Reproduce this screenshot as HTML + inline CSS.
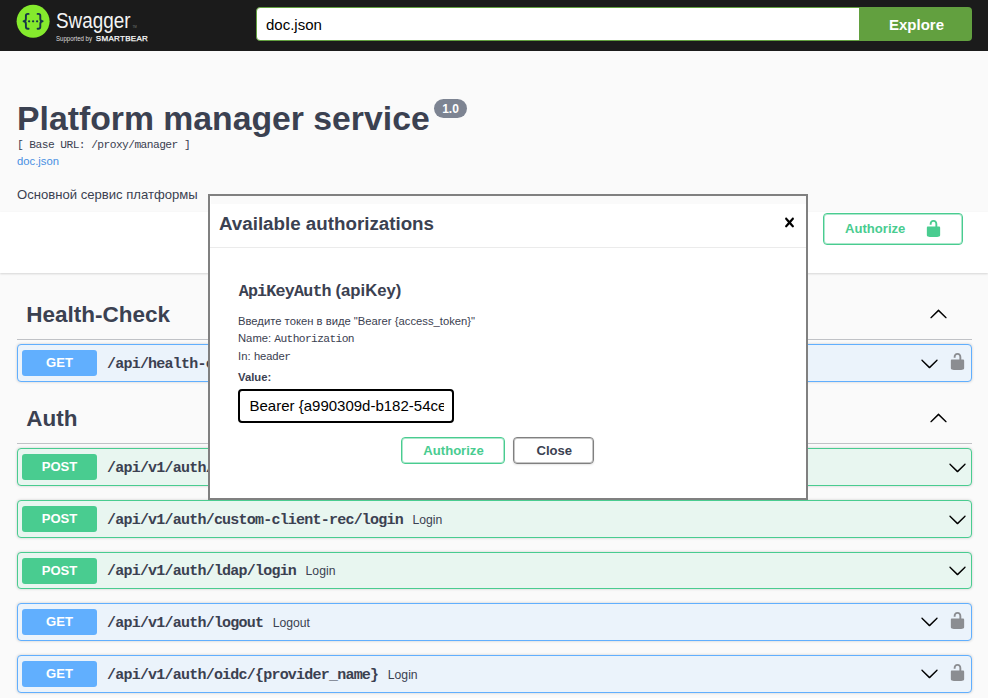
<!DOCTYPE html>
<html><head><meta charset="utf-8">
<style>
*{box-sizing:border-box}
html,body{margin:0;padding:0}
body{width:988px;height:698px;overflow:hidden;background:#fafafa;font-family:"Liberation Sans",sans-serif;color:#3b4151;position:relative}
.topbar{position:absolute;left:0;top:0;width:988px;height:51px;background:#1b1b1b}
.logo-c{position:absolute;left:17px;top:5px;width:32px;height:32px}
.logo-t{position:absolute;left:55px;top:7px;font-size:22px;color:#fff;letter-spacing:-0.5px}
.logo-s{position:absolute;left:55px;top:35px;font-size:6px;color:#fff;white-space:nowrap}
.logo-s b{font-size:7px;letter-spacing:0.7px;margin-left:2px}
.inp{position:absolute;left:256px;top:7px;width:604px;height:34px;background:#fff;border:1px solid #62a03f;border-radius:4px 0 0 4px;font-size:15px;color:#000;padding:8px 9px;line-height:18px}
.explore{position:absolute;left:860px;top:7px;width:112px;height:34px;background:#62a03f;border-radius:0 4px 4px 0;color:#fff;font-weight:bold;font-size:15px;text-align:center;line-height:35px;padding-left:1px}
h2.title{position:absolute;left:17px;top:97.7px;margin:0;font-size:33.75px;line-height:40px;font-weight:bold;color:#3b4151;white-space:nowrap}
.ver{position:absolute;left:434px;top:99px;width:33px;height:19px;border-radius:10px;background:#7d8492;color:#fff;font-size:12px;font-weight:bold;text-align:center;line-height:20px}
.base{position:absolute;left:17px;top:138px;font-family:"Liberation Mono",monospace;font-size:11.25px;letter-spacing:-0.57px;line-height:14px;white-space:pre;color:#3b4151}
.link{position:absolute;left:17px;top:154px;font-size:11.25px;line-height:14px;color:#4990e2}
.desc{position:absolute;left:17px;top:187px;font-size:13.1px;line-height:16px;color:#3b4151}
.scheme{position:absolute;left:0;top:212px;width:988px;height:61px;background:#fff;box-shadow:0 1px 2px 0 rgba(0,0,0,.15)}
.authbtn{position:absolute;left:823px;top:213px;width:140px;height:32px;border:1px solid #49cc90;box-shadow:inset 0 0 0 1px rgba(73,204,144,.45);border-radius:4px;color:#49cc90;font-weight:bold;font-size:13.1px;line-height:30px;padding-left:21px}
h3.tag{position:absolute;left:17px;width:955px;margin:0;font-size:22.5px;line-height:28px;font-weight:bold;color:#3b4151;padding-left:9.25px;border-bottom:1px solid rgba(59,65,81,.3)}
.op{position:absolute;left:17px;width:955px;height:37.5px;border:1px solid;border-radius:4px;box-shadow:0 0 3px rgba(0,0,0,.19)}
.op.get{border-color:#61affe;background:#ebf3fb}
.op.post{border-color:#49cc90;background:#e8f6f0}
.m{position:absolute;left:4px;top:5px;width:75px;height:26px;border-radius:3px;color:#fff;font-weight:bold;font-size:13.1px;text-align:center;line-height:25.6px}
.get .m{background:#61affe}
.post .m{background:#49cc90}
.p{position:absolute;left:89px;top:9.6px;font-family:"Liberation Mono",monospace;font-weight:bold;font-size:15px;letter-spacing:-0.78px;line-height:20px;color:#3b4151;white-space:nowrap}
.p span{font-family:"Liberation Sans",sans-serif;font-weight:normal;font-size:12.2px;letter-spacing:0;margin-left:9.5px;line-height:0}
svg.ic{position:absolute;width:19px;height:19px}
.modal{position:absolute;left:208px;top:194px;width:600px;height:306px;border:2px solid #808080;background:#fff}
.modal .band{position:absolute;left:1px;top:0;right:0;height:8px;background:#fafafa}
.modal h3{position:absolute;left:9px;top:15.6px;margin:0;font-size:18.75px;line-height:24px;font-weight:bold;color:#3b4151}
.modal .hr{position:absolute;left:0;right:0;top:51px;height:1px;background:#ebebeb}
.modal h4{position:absolute;left:28.7px;top:84.5px;margin:0;font-size:16.7px;line-height:20px;font-weight:bold;color:#3b4151;white-space:nowrap}
.modal h4 code{font-family:"Liberation Mono",monospace;font-size:16.7px;letter-spacing:-0.8px}
.modal .t{position:absolute;left:28px;font-size:11.25px;line-height:14px;color:#3b4151;white-space:nowrap}
.modal .t code{font-family:"Liberation Mono",monospace;font-size:11.25px;letter-spacing:-0.62px}
.modal .val{position:absolute;left:28px;top:193.25px;width:216px;height:34px;border:2px solid #000;border-radius:4px;font-size:15px;color:#000;line-height:30.5px;padding-left:9.5px;overflow:hidden;white-space:nowrap}
.modal .val div{width:194.5px;overflow:hidden}
.mb{position:absolute;top:241px;height:27px;border:1px solid;border-radius:4px;font-weight:bold;font-size:13.1px;text-align:center;line-height:25.5px;padding-left:1.5px}
.mb.a{left:191px;width:103.5px;border-color:#49cc90;color:#49cc90;box-shadow:inset 0 0 0 1px rgba(73,204,144,.45)}
.mb.c{left:303px;width:81px;border-color:#808080;color:#3b4151;box-shadow:inset 0 0 0 1px rgba(128,128,128,.45),0 1px 2px rgba(0,0,0,.1)}
</style></head><body>
<svg width="0" height="0" style="position:absolute"><defs>
<path id="dn" d="M17.418 6.109c.272-.268.709-.268.979 0s.271.701 0 .969l-7.908 7.830c-.27.268-.707.268-.979 0l-7.908-7.830c-.27-.268-.27-.701 0-.969.271-.268.709-.268.979 0L10 13.250l7.418-7.141z"/>
<path id="up" d="M17.418 14.908C17.690 15.176 18.127 15.176 18.397 14.908C18.667 14.640 18.668 14.207 18.397 13.939L10.489 6.109C10.219 5.841 9.782 5.841 9.510 6.109L1.602 13.939C1.332 14.207 1.332 14.640 1.602 14.908C1.873 15.176 2.311 15.176 2.581 14.908L10 7.767L17.418 14.908Z"/>
<path id="ul" d="M15.8 8H14V5.6C14 2.703 12.665 1 10 1 7.334 1 6 2.703 6 5.600V6h2v-.801C8 3.754 8.797 3 10 3c1.203 0 2 .754 2 2.199V8H4c-.553 0-1 .646-1 1.199V17c0 .549.428 1.139.951 1.307l1.197.387C5.672 18.861 6.550 19 7.100 19h5.800c.549 0 1.428-.139 1.951-.307l1.196-.387c.524-.167.953-.757.953-1.306V9.199C17 8.646 16.352 8 15.800 8z"/>
</defs></svg>
<div class="topbar">
<svg style="position:absolute;left:0;top:0" width="170" height="51" viewBox="0 0 170 51">
<circle cx="33.1" cy="21.3" r="16.5" fill="#85ea2d"/>
<g fill="none" stroke="#173647" stroke-width="1.9" stroke-linecap="round" stroke-linejoin="round">
<path d="M28.6 13.9h-0.8q-1.9 0-1.9 1.9v2.9q0 2.6-2.3 2.6q2.3 0 2.3 2.6v2.9q0 1.9 1.9 1.9h0.8"/>
<path d="M37.6 13.9h0.8q1.9 0 1.9 1.9v2.9q0 2.6 2.3 2.6q-2.3 0-2.3 2.6v2.9q0 1.9-1.9 1.9h-0.8"/>
</g>
<g fill="#173647"><circle cx="29.1" cy="21.3" r="1.15"/><circle cx="33.1" cy="21.3" r="1.15"/><circle cx="37.1" cy="21.3" r="1.15"/></g>
<text x="56" y="27.8" font-family="Liberation Sans, sans-serif" font-size="21.2" fill="#f4f4f4" textLength="74.5" lengthAdjust="spacingAndGlyphs">Swagger</text>
<text x="132.4" y="28.2" font-family="Liberation Sans, sans-serif" font-size="3" fill="#777">TM</text>
<text x="56" y="41.2" font-family="Liberation Sans, sans-serif" font-size="6.8" fill="#ddd" textLength="36" lengthAdjust="spacingAndGlyphs">Supported by</text>
<text x="95.8" y="41.2" font-family="Liberation Sans, sans-serif" font-size="8" fill="#fff" stroke="#fff" stroke-width="0.25" textLength="52" lengthAdjust="spacing">SMARTBEAR</text>
</svg>
<div class="inp">doc.json</div>
<div class="explore">Explore</div>
</div>
<h2 class="title">Platform manager service</h2>
<div class="ver">1.0</div>
<div class="base">[ Base URL: /proxy/manager ]</div>
<div class="link">doc.json</div>
<div class="desc">Основной сервис платформы</div>
<div class="scheme"></div>
<div class="authbtn">Authorize</div>
<h3 class="tag" style="top:289px;height:51px;padding-top:11.7px">Health-Check</h3>
<div class="op get" style="top:344.4px"><div class="m">GET</div><div class="p">/api/health-check</div><svg class="ic" viewBox="0 0 20 20" style="left:901.8px;top:8.4px;fill:#000"><use href="#dn"/></svg><svg class="ic" viewBox="0 0 20 20" style="left:930.1px;top:6.8px;fill:#8b8d91"><use href="#ul"/></svg></div>
<h3 class="tag" style="top:393px;height:51px;padding-top:11.7px">Auth</h3>
<div class="op post" style="top:448px"><div class="m">POST</div><div class="p">/api/v1/auth/login</div><svg class="ic" viewBox="0 0 20 20" style="left:929.7px;top:8.6px;fill:#000"><use href="#dn"/></svg></div>
<div class="op post" style="top:500px"><div class="m">POST</div><div class="p">/api/v1/auth/custom-client-rec/login<span>Login</span></div><svg class="ic" viewBox="0 0 20 20" style="left:929.7px;top:8.6px;fill:#000"><use href="#dn"/></svg></div>
<div class="op post" style="top:551.7px"><div class="m">POST</div><div class="p">/api/v1/auth/ldap/login<span>Login</span></div><svg class="ic" viewBox="0 0 20 20" style="left:929.7px;top:8.6px;fill:#000"><use href="#dn"/></svg></div>
<div class="op get" style="top:603px"><div class="m">GET</div><div class="p">/api/v1/auth/logout<span>Logout</span></div><svg class="ic" viewBox="0 0 20 20" style="left:901.8px;top:8.4px;fill:#000"><use href="#dn"/></svg><svg class="ic" viewBox="0 0 20 20" style="left:930.1px;top:6.8px;fill:#8b8d91"><use href="#ul"/></svg></div>
<div class="op get" style="top:655px"><div class="m">GET</div><div class="p">/api/v1/auth/oidc/{provider_name}<span>Login</span></div><svg class="ic" viewBox="0 0 20 20" style="left:901.8px;top:8.4px;fill:#000"><use href="#dn"/></svg><svg class="ic" viewBox="0 0 20 20" style="left:930.1px;top:6.8px;fill:#8b8d91"><use href="#ul"/></svg></div>
<svg class="ic" viewBox="0 0 20 20" style="left:923.6px;top:219.0px;fill:#49cc90"><use href="#ul"/></svg>
<svg class="ic" viewBox="0 0 20 20" style="left:928.8px;top:303.7px;fill:#000"><use href="#up"/></svg>
<svg class="ic" viewBox="0 0 20 20" style="left:928.8px;top:407.7px;fill:#000"><use href="#up"/></svg>
<div class="modal">
<div class="band"></div>
<h3>Available authorizations</h3>
<svg class="ic" viewBox="0 0 20 20" style="left:570px;top:17.3px;fill:#000"><path d="M14.348 14.849c-.469.469-1.229.469-1.697 0L10 11.819l-2.651 3.029c-.469.469-1.229.469-1.697 0-.469-.469-.469-1.229 0-1.697l2.758-3.150-2.759-3.152c-.469-.469-.469-1.228 0-1.697.469-.469 1.228-.469 1.697 0L10 8.183l2.651-3.031c.469-.469 1.228-.469 1.697 0 .469.469.469 1.229 0 1.697l-2.758 3.152 2.758 3.150c.469.469.469 1.229 0 1.698z"/></svg>
<div class="hr"></div>
<h4><code>ApiKeyAuth</code> (apiKey)</h4>
<div class="t" style="top:118px">Введите токен в виде "Bearer {access_token}"</div>
<div class="t" style="top:134.5px">Name: <code>Authorization</code></div>
<div class="t" style="top:152.5px">In: <code>header</code></div>
<div class="t" style="top:174px;font-weight:bold">Value:</div>
<div class="val"><div>Bearer {a990309d-b182-54ce</div></div>
<div class="mb a">Authorize</div>
<div class="mb c">Close</div>
</div>
</body></html>
